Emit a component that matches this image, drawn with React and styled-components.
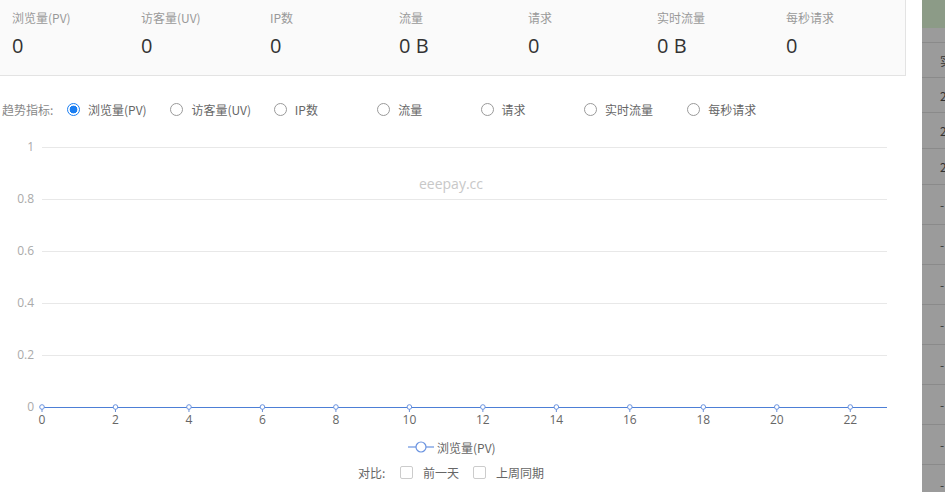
import React, { useState } from "react";
import styled, { createGlobalStyle } from "styled-components";

const GlobalStyle = createGlobalStyle`
  * { box-sizing: border-box; }
  body {
    margin: 0;
    background: #fff;
    overflow: hidden;
    font-family: "Open Sans", "Noto Sans CJK SC", sans-serif;
  }
`;

const stats = [
  { label: "浏览量(PV)", value: "0" },
  { label: "访客量(UV)", value: "0" },
  { label: "IP数", value: "0" },
  { label: "流量", value: "0 B" },
  { label: "请求", value: "0" },
  { label: "实时流量", value: "0 B" },
  { label: "每秒请求", value: "0" },
];

const metrics = ["浏览量(PV)", "访客量(UV)", "IP数", "流量", "请求", "实时流量", "每秒请求"];

// 右侧被遮罩盖住的表格
const sideRows = [
  { h: 15, text: "" },
  { h: 35, text: "实" },
  { h: 35, text: "2" },
  { h: 36, text: "2" },
  { h: 36, text: "2" },
  { h: 40, text: "-" },
  { h: 40, text: "-" },
  { h: 40, text: "-" },
  { h: 40, text: "-" },
  { h: 40, text: "-" },
  { h: 40, text: "-" },
  { h: 40, text: "-" },
  { h: 40, text: "-" },
];

const X0 = 42;
const X1 = 887;
const unit = (X1 - X0) / 23;
const yTicks = [
  { v: "1", y: 17 },
  { v: "0.8", y: 69 },
  { v: "0.6", y: 121 },
  { v: "0.4", y: 173 },
  { v: "0.2", y: 225 },
  { v: "0", y: 277 },
];
const xTicks = [0, 2, 4, 6, 8, 10, 12, 14, 16, 18, 20, 22];

function Chart() {
  const baseY = 277;
  return (
    <ChartSvg width="922" height="300" viewBox="0 0 922 300">
      {yTicks.map((t) => (
        <g key={t.v}>
          <line x1={X0} x2={X1} y1={t.y + 0.5} y2={t.y + 0.5} stroke="#e8e8e8" />
          <text x="34" y={t.y + 4} textAnchor="end" fontSize="12" fill="#aaa">
            {t.v}
          </text>
        </g>
      ))}
      <text x="451" y="59" textAnchor="middle" fontSize="14" fill="#c8c8c8">
        eeepay.cc
      </text>
      <line x1={X0} x2={X1} y1={baseY + 0.5} y2={baseY + 0.5} stroke="#4d7fd6" strokeWidth="1.2" />
      {xTicks.map((n) => {
        const x = X0 + n * unit;
        return (
          <g key={n}>
            <line x1={x} x2={x} y1={baseY} y2={baseY + 5} stroke="#6a8fd6" />
            <circle cx={x} cy={baseY} r="2.3" fill="#fff" stroke="#6a93e0" strokeWidth="1" />
            <text x={x} y={baseY + 17} textAnchor="middle" fontSize="12" fill="#666">
              {n}
            </text>
          </g>
        );
      })}
    </ChartSvg>
  );
}

export default function App() {
  const [active, setActive] = useState(0);
  const [compare, setCompare] = useState({ day: false, week: false });

  return (
    <>
      <GlobalStyle />
      <Page>
        <Main>
          <StatsPanel>
            {stats.map((s) => (
              <StatItem key={s.label}>
                <StatLabel>{s.label}</StatLabel>
                <StatValue>{s.value}</StatValue>
              </StatItem>
            ))}
          </StatsPanel>

          <TrendRow>
            <TrendTitle>趋势指标:</TrendTitle>
            {metrics.map((m, i) => (
              <RadioItem key={m} onClick={() => setActive(i)}>
                <RadioDot $checked={active === i} />
                <RadioText>{m}</RadioText>
              </RadioItem>
            ))}
          </TrendRow>

          <Chart />

          <LegendRow>
            <LegendIcon width="26" height="12" viewBox="0 0 26 12">
              <line x1="0" x2="26" y1="6" y2="6" stroke="#6a93e0" strokeWidth="1.2" />
              <circle cx="13" cy="6" r="5" fill="#fff" stroke="#6a93e0" strokeWidth="1.2" />
            </LegendIcon>
            <LegendText>浏览量(PV)</LegendText>
          </LegendRow>

          <CompareRow>
            <CompareTitle>对比:</CompareTitle>
            <CheckItem onClick={() => setCompare((c) => ({ ...c, day: !c.day }))}>
              <CheckBox $checked={compare.day} />
              <CheckText>前一天</CheckText>
            </CheckItem>
            <CheckItem onClick={() => setCompare((c) => ({ ...c, week: !c.week }))}>
              <CheckBox $checked={compare.week} />
              <CheckText>上周同期</CheckText>
            </CheckItem>
          </CompareRow>
        </Main>

        <Backdrop>
          <BackdropHead />
          {sideRows.map((r, i) => (
            <BackdropRow key={i} style={{ height: r.h }}>
              {r.text}
            </BackdropRow>
          ))}
        </Backdrop>
      </Page>
    </>
  );
}

const Page = styled.div`
  display: flex;
  width: 945px;
  height: 492px;
  overflow: hidden;
`;

const Main = styled.div`
  width: 922px;
  flex-shrink: 0;
  display: flex;
  flex-direction: column;
`;

const StatsPanel = styled.div`
  width: 906px;
  height: 76px;
  display: flex;
  padding: 9px 0 0 12px;
  background: #fafafa;
  border-right: 1px solid #e3e3e3;
  border-bottom: 1px solid #e3e3e3;
  overflow: hidden;
`;

const StatItem = styled.div`
  width: 129px;
  flex-shrink: 0;
  display: flex;
  flex-direction: column;
`;

const StatLabel = styled.div`
  font-family: "Noto Sans CJK SC", sans-serif;
  font-size: 12px;
  line-height: 17px;
  color: #999;
`;

const StatValue = styled.div`
  margin-top: 7px;
  font-size: 20px;
  line-height: 26px;
  color: #333;
`;

const TrendRow = styled.div`
  height: 54px;
  display: flex;
  align-items: center;
  padding: 13px 0 0 2px;
`;

const TrendTitle = styled.span`
  width: 65px;
  font-family: "Noto Sans CJK SC", sans-serif;
  font-size: 12px;
  color: #888;
`;

const RadioItem = styled.label`
  width: 103.4px;
  display: flex;
  align-items: center;
  cursor: pointer;
`;

const RadioDot = styled.span`
  width: 13px;
  height: 13px;
  border-radius: 50%;
  border: 1px solid ${(p) => (p.$checked ? "#1a7ef2" : "#9a9a9a")};
  background: ${(p) =>
    p.$checked ? "radial-gradient(circle, #1a7ef2 0 3.6px, #fff 4.2px)" : "#fff"};
  flex-shrink: 0;
`;

const RadioText = styled.span`
  margin-left: 8px;
  font-family: "Noto Sans CJK SC", sans-serif;
  font-size: 12px;
  color: #666;
`;

const ChartSvg = styled.svg`
  display: block;
  font-family: "Open Sans", sans-serif;
`;

const LegendRow = styled.div`
  height: 30px;
  display: flex;
  align-items: center;
  padding: 4px 0 0 408px;
`;

const LegendIcon = styled.svg`
  display: block;
`;

const LegendText = styled.span`
  margin-left: 3px;
  font-family: "Noto Sans CJK SC", sans-serif;
  font-size: 12px;
  color: #666;
`;

const CompareRow = styled.div`
  height: 24px;
  display: flex;
  align-items: center;
  padding-left: 358px;
`;

const CompareTitle = styled.span`
  width: 42px;
  font-family: "Noto Sans CJK SC", sans-serif;
  font-size: 12px;
  color: #666;
`;

const CheckItem = styled.label`
  display: flex;
  align-items: center;
  margin-right: 14px;
  cursor: pointer;
`;

const CheckBox = styled.span`
  width: 13px;
  height: 13px;
  border: 1px solid #ccc;
  border-radius: 2px;
  background: ${(p) => (p.$checked ? "#1a7ef2" : "#fff")};
`;

const CheckText = styled.span`
  margin-left: 10px;
  font-family: "Noto Sans CJK SC", sans-serif;
  font-size: 12px;
  color: #666;
`;

const Backdrop = styled.div`
  flex: 1;
  background: #9b9b9b;
  display: flex;
  flex-direction: column;
`;

const BackdropHead = styled.div`
  height: 28px;
  background: #8c9b87;
  flex-shrink: 0;
`;

const BackdropRow = styled.div`
  flex-shrink: 0;
  display: flex;
  align-items: center;
  padding-left: 18px;
  border-bottom: 1px solid #8a8a8a;
  font-family: "Noto Sans CJK SC", sans-serif;
  font-size: 12px;
  color: #333;
  overflow: hidden;
  white-space: nowrap;
`;
